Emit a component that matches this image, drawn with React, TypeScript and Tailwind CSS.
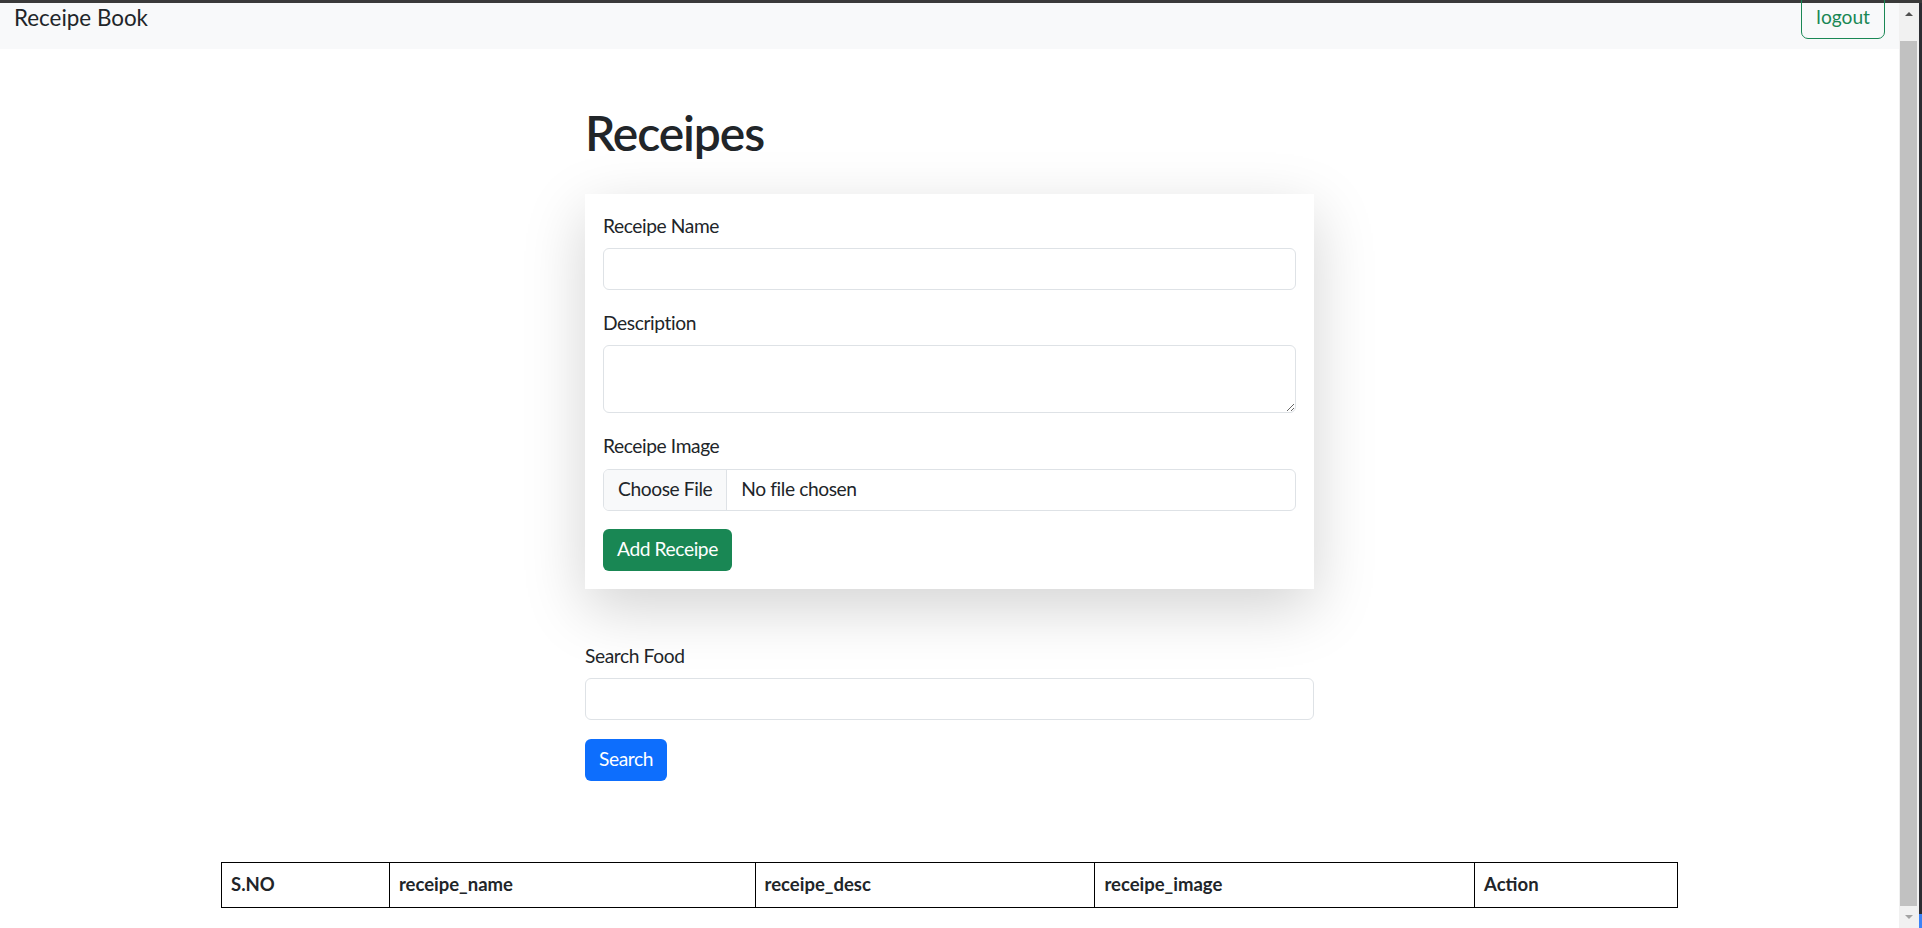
import { useState } from "react";

const label = "block text-[19.2px] leading-[29px] tracking-[-0.4px] text-[#212529]";
const input =
  "block w-full h-[42px] rounded-[6px] border border-[#dee2e6] bg-white px-[14px] outline-none";
const btn = "h-[42px] rounded-[6px] px-[14px] text-[19.2px] tracking-[-0.4px] text-white";

const cols = [
  { name: "S.NO", w: "w-[168px]" },
  { name: "receipe_name", w: "w-[366px]" },
  { name: "receipe_desc", w: "w-[340px]" },
  { name: "receipe_image", w: "w-[380px]" },
  { name: "Action", w: "w-[203px]" },
];

const App = () => {
  const [name, setName] = useState("");
  const [desc, setDesc] = useState("");
  const [search, setSearch] = useState("");

  return (
    <div className="h-[928px] w-full overflow-hidden flex flex-col bg-white text-[#212529] [font-family:Lato,sans-serif]">
      <div className="h-[3px] bg-[#3a3a3a] shrink-0" />
      <div className="flex flex-1 min-h-0">
        {/* page */}
        <div className="flex-1 min-w-0">
          <nav className="h-[46px] bg-[#f8f9fa] flex justify-between items-start">
            <span className="ml-[14px] -mt-[1px] text-[22.4px] leading-[32px]">
              Receipe Book
            </span>
            <button className="mr-[14px] -mt-[9px] h-[45px] rounded-[7px] border border-[#198754] px-[14px] pt-[2px] text-[19.2px] text-[#198754]">
              logout
            </button>
          </nav>

          <div className="w-[729px] mx-auto">
            <h1 className="mt-[55px] mb-[32px] text-[48px] leading-[57.6px] font-semibold tracking-[-1.1px]">
              Receipes
            </h1>

            <form
              className="bg-white px-[18px] pt-[17px] pb-[18px] shadow-[0_19px_58px_rgba(0,0,0,0.175)]"
              onSubmit={(e) => e.preventDefault()}
            >
              <label className={`${label} mb-[8px]`}>Receipe Name</label>
              <input
                type="text"
                value={name}
                onChange={(e) => setName(e.target.value)}
                className={input}
              />

              <label className={`${label} mt-[18px] mb-[8px]`}>Description</label>
              <textarea
                value={desc}
                onChange={(e) => setDesc(e.target.value)}
                className="block w-full h-[68px] rounded-[6px] border border-[#dee2e6] bg-white px-[14px] py-[7px] outline-none"
              />

              <label className={`${label} mt-[18px] mb-[9px]`}>Receipe Image</label>
              <label className="flex h-[42px] w-full overflow-hidden rounded-[6px] border border-[#dee2e6] text-[19.2px] tracking-[-0.4px] cursor-pointer">
                <span className="flex items-center bg-[#f8f9fa] border-r border-[#dee2e6] px-[14px]">
                  Choose File
                </span>
                <span className="flex items-center pl-[14px]">No file chosen</span>
                <input type="file" className="hidden" />
              </label>

              <button type="submit" className={`${btn} mt-[18px] bg-[#198754]`}>
                Add Receipe
              </button>
            </form>

            {/* search */}
            <div className="mt-[52px]">
              <label className={`${label} mb-[8px]`}>Search Food</label>
              <input
                type="text"
                value={search}
                onChange={(e) => setSearch(e.target.value)}
                className={input}
              />
              <button className={`${btn} mt-[19px] bg-[#0d6efd]`}>Search</button>
            </div>
          </div>

          <table className="mx-auto mt-[81px] w-[1457px] border-collapse">
            <thead>
              <tr>
                {cols.map((c) => (
                  <th
                    key={c.name}
                    className={`${c.w} h-[45px] border border-black px-[9px] text-left text-[18.5px] font-bold`}
                  >
                    {c.name}
                  </th>
                ))}
              </tr>
            </thead>
          </table>
        </div>

        {/* scrollbar */}
        <div className="w-[20px] shrink-0 bg-[#f1f1f1] flex flex-col items-center">
          <div className="h-[22px] flex items-center justify-center">
            <div className="w-0 h-0 border-x-[4px] border-x-transparent border-b-[4px] border-b-[#505050]" />
          </div>
          <div className="mt-[16px] w-[17px] h-[865px] bg-[#c1c1c1] ml-[-1px]" />
          <div className="flex-1 flex items-center justify-center">
            <div className="w-0 h-0 border-x-[4px] border-x-transparent border-t-[4px] border-t-[#a3a3a3]" />
          </div>
        </div>
        <div className="w-[3px] shrink-0 bg-[#2c2d33] flex flex-col justify-end">
          <div className="h-[14px] bg-[#3b82f6]" />
        </div>
      </div>
    </div>
  );
};

export default App;
